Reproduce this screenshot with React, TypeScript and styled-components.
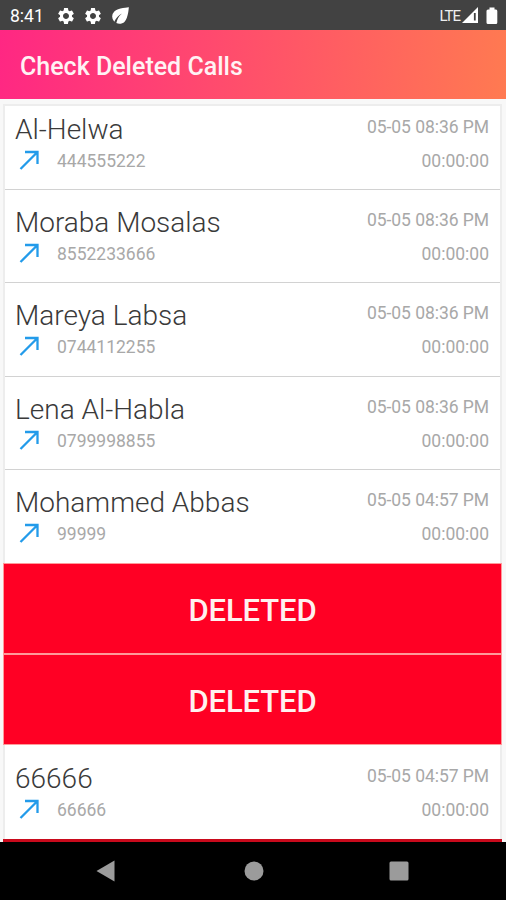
import React from 'react';
import styled, { createGlobalStyle } from 'styled-components';
import { MdSettings, MdEco } from 'react-icons/md';

const GlobalStyle = createGlobalStyle`
  * { box-sizing: border-box; }
  body { margin: 0; font-family: Roboto, sans-serif; overflow: hidden; }
`;

const Screen = styled.div`
  display: flex;
  flex-direction: column;
  width: 506px;
  height: 900px;
  overflow: hidden;
  background: #f8f8f8;
`;

const StatusBar = styled.div`
  display: flex;
  flex: none;
  align-items: center;
  justify-content: space-between;
  height: 30px;
  padding: 1px 8px 0 10px;
  background: #424242;
  color: #fff;
`;

const StatusGroup = styled.div`
  display: flex;
  align-items: center;
`;

const Clock = styled.span`
  width: 46px;
  font-size: 17.5px;
  line-height: 20px;
`;

const Notices = styled.div`
  display: flex;
  align-items: center;
`;

const SettingsIcon = styled(MdSettings)`
  margin-right: 7px;
`;

const LeafIcon = styled(MdEco)`
  margin-left: -2px;
`;

const Network = styled.span`
  margin-right: 2px;
  font-size: 15px;
  line-height: 20px;
  letter-spacing: -1px;
  color: #eee;
`;

const Header = styled.header`
  display: flex;
  flex: none;
  align-items: center;
  height: 69px;
  padding: 4px 20px 0;
  background: linear-gradient(95deg, #ff2783 0%, #ff7a51 100%);
`;

const Title = styled.h1`
  margin: 0;
  font-size: 25px;
  font-weight: 500;
  line-height: 30px;
  color: #fff2f4;
`;

const List = styled.main`
  flex: 1;
  min-height: 0;
  margin: 5px 4px 0 3px;
  border: solid #ededed;
  border-width: 2px 2px 0;
  background: #fff;
`;

const Row = styled.section<{ $height: number; $gap?: number; $last?: boolean }>`
  display: flex;
  flex-direction: column;
  justify-content: flex-end;
  height: ${p => p.$height}px;
  padding: 0 11px ${p => p.$gap ?? 15}px 10px;
  border-bottom: 1px solid ${p => (p.$last ? 'transparent' : '#d2d2d2')};
`;

const Line = styled.div<{ $height: number }>`
  display: flex;
  align-items: center;
  justify-content: space-between;
  height: ${p => p.$height}px;
`;

const Name = styled.span`
  font-size: 28px;
  font-weight: 300;
  line-height: 36px;
  color: #3a3a3a;
`;

const Detail = styled.span`
  font-size: 17.5px;
  font-weight: 400;
  line-height: 24px;
  color: #a8a8a8;
`;

const Stamp = styled(Detail)`
  margin-top: -7px;
  letter-spacing: -0.05px;
`;

const Caller = styled.div`
  display: flex;
  align-items: center;
  gap: 17px;
  padding-left: 4px;
`;

const Deleted = styled.section`
  display: flex;
  align-items: center;
  justify-content: center;
  height: 89px;
  margin: 0 -1px 2px -1px;
  padding: 3px 0 0;
  background: #ff0024;
  box-shadow: 0 0 0 1px #ff9a9a;
  font-size: 31px;
  font-weight: 500;
  letter-spacing: -0.1px;
  color: #fff0ee;
`;

const NextDeleted = styled.div`
  height: 3px;
  margin: 0 -2px;
  background: #c90a1c;
`;

const NavBar = styled.nav`
  display: flex;
  flex: none;
  align-items: center;
  justify-content: space-between;
  height: 58px;
  padding: 0 97px 0 96px;
  background: #000;
`;

const HomeIcon = styled.svg`
  margin-left: 3px;
`;

const OutgoingArrow = () => (
  <svg width="21" height="21" viewBox="0 0 21 21" fill="none" stroke="#239bea" strokeWidth="2.3">
    <path d="M1.500 19L18 2.500M6 2H18.500V14" />
  </svg>
);

type Call = { name: string; number: string; time: string; height: number; gap?: number; last?: boolean };

const callsBefore: Call[] = [
  { name: 'Al-Helwa', number: '444555222', time: '05-05 08:36 PM', height: 84 },
  { name: 'Moraba Mosalas', number: '8552233666', time: '05-05 08:36 PM', height: 93 },
  { name: 'Mareya Labsa', number: '0744112255', time: '05-05 08:36 PM', height: 94, gap: 16 },
  { name: 'Lena Al-Habla', number: '0799998855', time: '05-05 08:36 PM', height: 93 },
  { name: 'Mohammed Abbas', number: '99999', time: '05-05 04:57 PM', height: 94, gap: 16, last: true },
];

const CallRow = ({ name, number, time, height, gap, last }: Call) => (
  <Row $height={height} $gap={gap} $last={last}>
    <Line $height={34}>
      <Name>{name}</Name>
      <Stamp>{time}</Stamp>
    </Line>
    <Line $height={27}>
      <Caller>
        <OutgoingArrow />
        <Detail>{number}</Detail>
      </Caller>
      <Detail>00:00:00</Detail>
    </Line>
  </Row>
);

export default function App() {
  return (
    <Screen>
      <GlobalStyle />
      <StatusBar>
        <StatusGroup>
          <Clock>8:41</Clock>
          <Notices>
            <SettingsIcon size={20} />
            <SettingsIcon size={20} />
            <LeafIcon size={25} />
          </Notices>
        </StatusGroup>
        <StatusGroup>
          <Network>LTE</Network>
          <svg width="17" height="17" viewBox="0 0 17 17">
            <path d="M0 16L16 0V16Z" fill="#fff" />
            <path d="M12.800 6V13.500" stroke="#424242" strokeWidth="1.800" />
          </svg>
          <svg width="19" height="18" viewBox="0 0 19 18">
            <path d="M10.500 0.500H15.500V2.500H17Q18.300 2.500 18.300 4V15.500Q18.300 17 17 17H9Q7.500 17 7.500 15.500V4Q7.500 2.500 9 2.500H10.500Z" fill="#fff" />
          </svg>
        </StatusGroup>
      </StatusBar>
      <Header>
        <Title>Check Deleted Calls</Title>
      </Header>
      <List>
        {callsBefore.map(call => (
          <CallRow key={call.name} {...call} />
        ))}
        <Deleted>DELETED</Deleted>
        <Deleted>DELETED</Deleted>
        <CallRow name="66666" number="66666" time="05-05 04:57 PM" height={93} last />
        <NextDeleted />
      </List>
      <NavBar>
        <svg width="19" height="22" viewBox="0 0 19 22">
          <path d="M0.500 11L18.500 0.500V21.500Z" fill="#9b9b9b" />
        </svg>
        <HomeIcon width="20" height="20" viewBox="0 0 20 20">
          <circle cx="10" cy="10" r="9.500" fill="#9b9b9b" />
        </HomeIcon>
        <svg width="20" height="20" viewBox="0 0 20 20">
          <rect x="0.500" y="0.500" width="19" height="19" rx="1.500" fill="#9b9b9b" />
        </svg>
      </NavBar>
    </Screen>
  );
}
